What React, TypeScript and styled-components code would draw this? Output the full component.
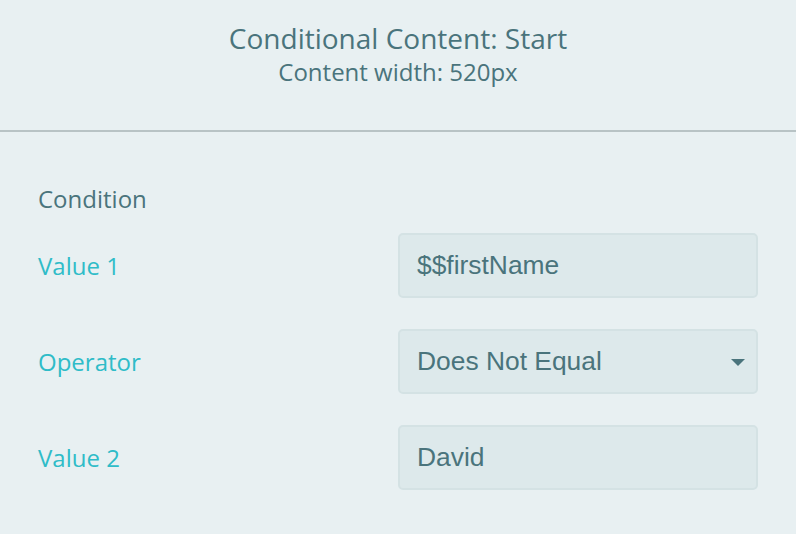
import React from "react";
import styled, { createGlobalStyle } from "styled-components";

const Global = createGlobalStyle`
  html, body { margin: 0; padding: 0; background: #e8f0f2; }
  body { width: 796px; height: 534px; overflow: hidden; }
`;

const Page = styled.div`
  width: 796px;
  height: 534px;
  background: #e8f0f2;
  font-family: "Open Sans", sans-serif;
  color: #4a747c;
`;

const Header = styled.header`
  height: 132px;
  box-sizing: border-box;
  border-bottom: 2px solid #b8c3c5;
  display: flex;
  flex-direction: column;
  align-items: center;
  padding-top: 19px;
`;

const Title = styled.h1`
  margin: 0;
  font-size: 28px;
  font-weight: 400;
  line-height: 38px;
`;

const Subtitle = styled.div`
  font-size: 24px;
  line-height: 30px;
`;

const Body = styled.section`
  padding: 52px 38px 0 38px;
  display: flex;
  flex-direction: column;
`;

const SectionLabel = styled.div`
  font-size: 24px;
  line-height: 30px;
  margin-bottom: 19px;
`;

const Rows = styled.div`
  display: flex;
  flex-direction: column;
  gap: 31px;
`;

const Row = styled.div`
  display: flex;
  align-items: center;
  justify-content: space-between;
`;

const Label = styled.label`
  font-size: 24px;
  color: #2fbcc8;
`;

const Field = styled.div`
  position: relative;
  width: 360px;
  height: 65px;
  box-sizing: border-box;
  border: 2px solid #d4e2e4;
  border-radius: 5px;
  background: #dde9eb;
  display: flex;
  align-items: center;
  padding-left: 17px;
  font-family: "Liberation Sans", Arial, sans-serif;
  font-size: 26.4px;
  color: #4a747c;
`;

const Caret = styled.svg`
  position: absolute;
  right: 11px;
  top: 50%;
  margin-top: -3px;
`;

export default function App() {
  return (
    <Page>
      <Global />
      <Header>
        <Title>Conditional Content: Start</Title>
        <Subtitle>Content width: 520px</Subtitle>
      </Header>
      <Body>
        <SectionLabel>Condition</SectionLabel>
        <Rows>
          <Row>
            <Label>Value 1</Label>
            <Field>$$firstName</Field>
          </Row>
          <Row>
            <Label>Operator</Label>
            <Field>
              Does Not Equal
              <Caret width="14" height="7" viewBox="0 0 14 7">
                <path d="M0 0 L14 0 L7 7 Z" fill="#4a747c" />
              </Caret>
            </Field>
          </Row>
          <Row>
            <Label>Value 2</Label>
            <Field>David</Field>
          </Row>
        </Rows>
      </Body>
    </Page>
  );
}
